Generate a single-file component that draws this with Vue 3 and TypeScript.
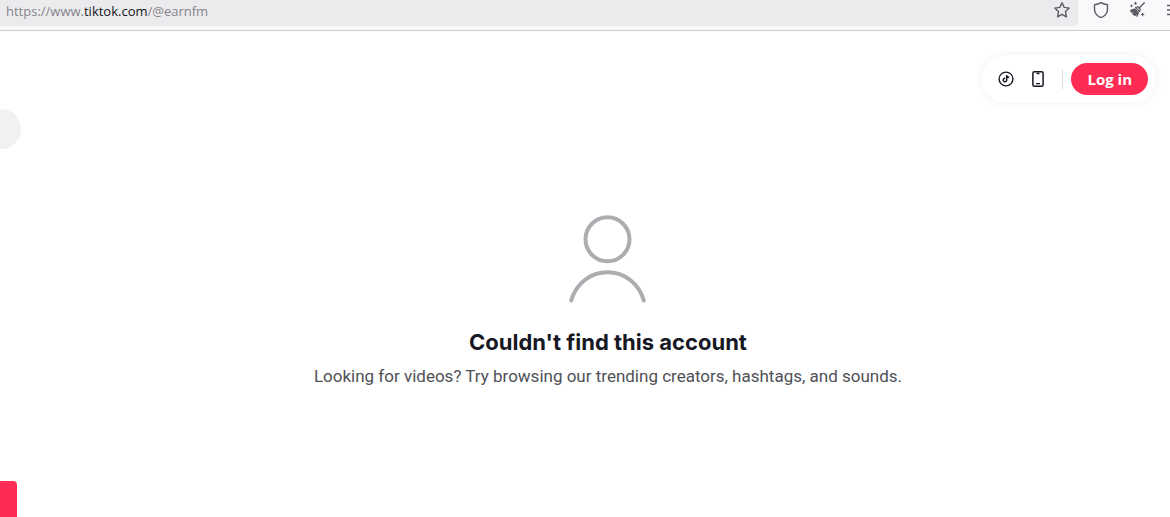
<script setup lang="ts">
import { ref } from 'vue'

const address = ref({ prefix: 'https://www.', domain: 'tiktok.com', path: '/@earnfm' })
</script>

<template>
  <div class="window">
    <header class="toolbar">
      <div class="address">
        <div class="url" role="textbox" aria-label="Address" tabindex="0">{{ address.prefix }}<span class="domain">{{ address.domain }}</span>{{ address.path }}</div>
        <button class="tool" type="button" aria-label="Bookmark this page">
          <svg width="16" height="18" viewBox="0 0 16 18" fill="none" stroke="#5b5b66" stroke-width="1.4" stroke-linejoin="round">
            <path d="M8 2.800l2.200 4.600 5 .7-3.700 3.500.9 5.200L8 14.300l-4.400 2.500.9-5.200L.8 8.100l5-.7z" />
          </svg>
        </button>
      </div>
      <button class="tool" type="button" aria-label="Protection">
        <svg width="16" height="18" viewBox="0 0 16 18" fill="none" stroke="#5b5b66" stroke-width="1.400" stroke-linejoin="round">
          <path d="M8 2.700c2 1.300 4.200 1.900 6.500 2.100v4.100c0 3.900-2.400 7-6.500 8.800C3.900 15.900 1.500 12.800 1.500 8.900V4.800c2.300-.2 4.500-.8 6.500-2.100z" />
        </svg>
      </button>
      <button class="tool" type="button" aria-label="Clear site data">
        <svg width="18" height="18" viewBox="0 0 18 18" fill="none" stroke="#5b5b66" stroke-width="1.300" stroke-linecap="round">
          <path d="M15.300 2.700L10 8.200" />
          <path d="M1.700 5.800h1.600M2.500 5v1.600M5.500 3.300h2M6.500 2.300v2M12.500 14.500h2.400M13.700 13.300v2.400" stroke-width="1.100" />
          <path d="M6.600 7.600l3.900 3.900c1-1.600.8-3-.2-3.900-1-.9-2.300-1-3.700 0z" stroke-linejoin="round" stroke-width="1.200" />
          <path d="M5.900 8.300L.9 10c.3 1.300.8 2.100 1.500 3l1.600-.9-.9 1.800c1 1 2 1.700 3.300 2.400l1-1.800.1 2.200.9.200 1.700-4.500z" fill="#5b5b66" stroke="none" />
        </svg>
      </button>
      <button class="tool menu" type="button" aria-label="Open menu">
        <svg width="16" height="18" viewBox="0 0 16 18" stroke="#5b5b66" stroke-width="1.300">
          <path d="M0 5.500h16M0 10h16M0 14.500h16" />
        </svg>
      </button>
    </header>

    <div class="page">
      <aside class="rail">
        <button class="search" type="button" aria-label="Search"></button>
        <button class="rail-login" type="button" aria-label="Log in"></button>
      </aside>

      <main class="content">
        <nav class="actions" aria-label="Account">
          <button class="action" type="button" aria-label="Get coins">
            <svg width="16" height="16" viewBox="0 0 16 16" fill="none" stroke="#161823" stroke-width="1.400">
              <circle cx="8" cy="8" r="6.900" />
              <path d="M7.300 7.300a1.750 1.750 0 1 0 1.400 1.700V4c.2 1.500 1 2.400 2.500 2.500" stroke-width="1.500" />
            </svg>
          </button>
          <button class="action" type="button" aria-label="Get app">
            <svg width="16" height="16" viewBox="0 0 16 16" fill="none" stroke="#161823" stroke-width="1.500">
              <rect x="2.900" y=".8" width="10.200" height="14.400" rx="1.500" />
              <path d="M6.500 2.500h3M6 12.600h4" stroke-width="1.300" />
            </svg>
          </button>
          <span class="divider"></span>
          <button class="login" type="button">Log in</button>
        </nav>

        <section class="empty">
          <svg class="avatar" width="80" height="90" viewBox="0 0 80 90" fill="none" stroke="#adadb1" stroke-width="4" stroke-linecap="round">
            <circle cx="39.500" cy="25.300" r="22" />
            <path d="M3.200 86.500C8 69.500 22.500 58.300 39.500 58.300S71 69.500 75.800 86.500" />
          </svg>
          <h1>Couldn't find this account</h1>
          <p>Looking for videos? Try browsing our trending creators, hashtags, and sounds.</p>
        </section>
      </main>
    </div>
  </div>
</template>

<style>
body {
  margin: 0;
  background: #fff;
}
</style>

<style scoped>
.window {
  display: flex;
  flex-direction: column;
  min-height: 100vh;
  overflow: hidden;
  font-family: Inter, "Liberation Sans", sans-serif;
}

button {
  padding: 0;
  border: 0;
  background: none;
  font: inherit;
  cursor: pointer;
}

svg {
  display: block;
}

.toolbar {
  display: flex;
  gap: 20px;
  height: 30px;
  background: #f9f9fb;
  border-bottom: 1px solid #cccccf;
}

.address {
  display: flex;
  align-items: flex-start;
  flex: 1;
  height: 26px;
  padding: 0 8px 0 6px;
  border-radius: 0 0 4px 0;
  background: #ebebed;
}

.url {
  flex: 1;
  color: #85858a;
  font: 13px/22px "Open Sans", "Noto Sans", sans-serif;
}

.domain {
  color: #15141a;
}

.tool {
  flex: none;
  align-self: flex-start;
}

.address + .tool {
  margin-left: -5px;
}

.menu {
  width: 3px;
  overflow: hidden;
}

.page {
  display: flex;
  flex: 1;
}

.rail {
  display: flex;
  flex-direction: column;
  justify-content: space-between;
  align-items: flex-start;
  width: 46px;
  padding-top: 78px;
}

.search {
  width: 21px;
  height: 40px;
  border-radius: 0 20px 20px 0;
  background: #f1f1f1;
}

.rail-login {
  width: 17px;
  height: 36px;
  border-radius: 0 4px 0 0;
  background: #fe2c55;
}

.content {
  display: flex;
  flex: 1;
  flex-direction: column;
}

.actions {
  display: flex;
  align-items: center;
  align-self: flex-end;
  gap: 16px;
  margin: 24px 14px 0 0;
  padding: 8px 8px 8px 16px;
  border-radius: 24px;
  background: #fff;
  box-shadow: 0 0 10px rgba(0, 0, 0, 0.06);
}

.divider {
  width: 1px;
  height: 20px;
  background: #dcdcde;
}

.login {
  height: 32px;
  margin-left: -8px;
  padding: 0 16px;
  border-radius: 16px;
  background: #fe2c55;
  color: #fff;
  font: 700 15px/32px "Open Sans", sans-serif;
}

.empty {
  display: flex;
  flex-direction: column;
  align-items: center;
  padding: 111px 24px 24px;
  text-align: center;
}

h1 {
  margin: 22px 0 0;
  color: #161823;
  font-size: 22px;
  font-weight: 700;
  line-height: 32px;
}

p {
  margin: 6px 0 0;
  color: #505057;
  font-family: Roboto, sans-serif;
  font-size: 17px;
  line-height: 24px;
}
</style>
